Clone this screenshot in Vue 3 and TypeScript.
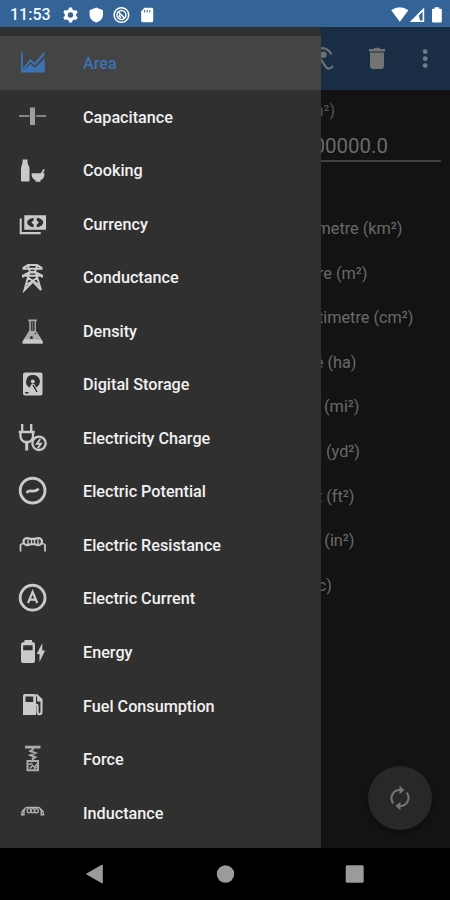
<script setup lang="ts">
interface MenuEntry {
  label: string
  icon: string
}

interface UnitRow {
  label: string
  width: number
}

const entries: MenuEntry[] = [
  { label: 'Area', icon: 'area' },
  { label: 'Capacitance', icon: 'capacitance' },
  { label: 'Cooking', icon: 'cooking' },
  { label: 'Currency', icon: 'currency' },
  { label: 'Conductance', icon: 'conductance' },
  { label: 'Density', icon: 'density' },
  { label: 'Digital Storage', icon: 'storage' },
  { label: 'Electricity Charge', icon: 'charge' },
  { label: 'Electric Potential', icon: 'potential' },
  { label: 'Electric Resistance', icon: 'resistance' },
  { label: 'Electric Current', icon: 'current' },
  { label: 'Energy', icon: 'energy' },
  { label: 'Fuel Consumption', icon: 'fuel' },
  { label: 'Force', icon: 'force' },
  { label: 'Inductance', icon: 'inductance' },
]

// Distance from the page's left edge to the end of each unit label.
const units: UnitRow[] = [
  { label: 'Kilometre (km²)', width: 402.5 },
  { label: 'Metre (m²)', width: 367.5 },
  { label: 'Centimetre (cm²)', width: 413.5 },
  { label: 'Hectare (ha)', width: 356.5 },
  { label: 'Mile (mi²)', width: 359.5 },
  { label: 'Yard (yd²)', width: 360 },
  { label: 'Foot (ft²)', width: 354.5 },
  { label: 'Inch (in²)', width: 354.5 },
  { label: 'Acre (ac)', width: 332 },
]
</script>

<template>
  <div class="screen">
    <header class="status">
      <span class="clock">11:53</span>
      <svg class="status-left" width="94" height="20" viewBox="62 4 94 20">
        <g fill="#fff">
          <g transform="translate(70.5 14)">
            <path fill-rule="evenodd" d="M-1.5-7.4h3l.5 2 1.7 1 2-.7 1.5 2.6-1.5 1.4v2.2l1.5 1.4-1.5 2.6-2-.7-1.7 1-.5 2h-3l-.5-2-1.7-1-2 .7-1.500-2.600 1.500-1.400v-2.200l-1.500-1.400 1.500-2.600 2 .7 1.700-1zM0-2.700a2.700 2.700 0 1 0 0 5.400a2.700 2.700 0 1 0 0-5.400z" />
          </g>
          <path d="M96.300 6.500l6.700 2.700v4.300c0 4-2.600 6.800-6.700 8-4.100-1.200-6.700-4-6.700-8V9.200z" />
          <path d="M144.500 6.700h7.200q1.500 0 1.500 1.500v11.500q0 1.500-1.500 1.500h-9q-1.500 0-1.500-1.500v-9.500z" />
        </g>
        <path d="M144.600 9v2.500M147.200 9v2.500M149.800 9v2.500" stroke="#336397" stroke-width="1" />
        <g fill="none" stroke="#fff">
          <circle cx="121.400" cy="14" r="7.300" stroke-width="1.500" />
          <circle cx="121.400" cy="14" r="4.500" stroke-width="1.400" />
          <path d="M118 10.500l7 7M120 13.500l-1 2 2 1" stroke-width="1.500" />
        </g>
      </svg>
      <svg class="status-right" width="56" height="20" viewBox="388 4 56 20">
        <g fill="#fff">
          <path d="M391.200 9.200q8.600-5.800 17.200 0L399.800 20.800z" />
          <path fill-rule="evenodd" d="M424.200 6.500v14.500h-14.500zM422.600 10.800l-3.700 3.700 1.200 5h2.500z" />
          <path d="M434.600 6.200h4.500v1.500h1.700q1 0 1 1v11.500q0 1.300-1.200 1.300h-7.400q-1.200 0-1.200-1.300V8.700q0-1 1-1h1.600z" />
        </g>
      </svg>
    </header>

    <main class="body">
      <section class="page">
        <div class="toolbar">
          <svg width="150" height="63" viewBox="300 27 150 63">
            <g fill="none" stroke="#6d6f71" stroke-width="2.200">
              <path d="M317 51q5-5 10-1.500 3 2 4.500 5M319 57l7 10q3 3.500 7-1" />
            </g>
            <circle cx="323.500" cy="54.800" r="3.200" fill="#6d6f71" />
            <path fill="#737472" d="M369 49h4.500l1.300-1.300h4.400l1.300 1.300h4.500v2.400h-16zM370 52.600h14v14q0 2.400-2.400 2.400h-9.200q-2.400 0-2.400-2.400z" />
            <g fill="#747b82">
              <circle cx="425.200" cy="51.700" r="2.400" />
              <circle cx="425.200" cy="58.700" r="2.400" />
              <circle cx="425.200" cy="65.600" r="2.400" />
            </g>
          </svg>
        </div>
        <div class="caption"><span>Square Metre (m²)</span></div>
        <div class="field"><span>1000000.0</span></div>
        <ul class="units">
          <li v-for="u in units" :key="u.label" :style="{ width: u.width + 'px' }">{{ u.label }}</li>
        </ul>
        <button class="fab" aria-label="Convert">
          <svg width="30" height="30" viewBox="0 0 30 30">
            <g fill="none" stroke="#747474" stroke-width="2.100">
              <path d="M8.300 20.300A8.200 8.200 0 0 1 15 7" />
              <path d="M21.700 9.700A8.200 8.200 0 0 1 15 23" />
            </g>
            <path fill="#747474" d="M14.500 2.800l5 4.200-5 4.200zM15.500 18.800l-5 4.200 5 4.200z" />
          </svg>
        </button>
      </section>

      <nav class="drawer">
        <a v-for="(e, i) in entries" :key="e.icon" class="entry" :class="{ active: i === 0 }">
          <svg class="icon" width="32" height="32" viewBox="0 0 32 32" fill="currentColor" stroke="none">
            <g v-if="e.icon === 'area'">
              <path d="M5 5.500h1.800v15.800l7.400-9.300 4.500 3.700L27.500 5.500 29 7.300 19 18.500l-4.700-3.800-7.500 9 7.700-6.700 4.700 3.800 9.600-9.300V25.600H5z" />
            </g>
            <g v-else-if="e.icon === 'capacitance'">
              <path d="M3 15h10.500v2H3zM20 15h10v2H20z" opacity=".55" />
              <path d="M14 7.500h5v17.500h-5z" opacity=".72" />
            </g>
            <g v-else-if="e.icon === 'cooking'">
              <path d="M6.500 5.500h5v3.200l2 5v12.800q0 1-1 1H6q-1 0-1-1V13.700l1.500-5z" />
              <path d="M15.500 19.200h9.300l2.700-4.200 1.300.8-1.800 3.400h1.500q0 5.300-4 7.100v1.400h-5v-1.400q-4-1.800-4-7.100z" />
            </g>
            <g v-else-if="e.icon === 'currency'">
              <path d="M3.700 11.500h2v13.500h19v2.200H3.700z" />
              <path fill-rule="evenodd" d="M8.300 8.300H30v14.500H8.300zM19.200 10.800c-5 0-8 2.200-8 4.700s3 4.800 8 4.800 8-2.200 8-4.800-3-4.700-8-4.700z" />
              <path d="M16.800 10.500h4.800q-1.300 1.400-1 2.800l2.400 2.200-2.400 2.200q-.3 1.300 1 2.800h-4.800q1.300-1.500 1-2.800l-2.400-2.200 2.400-2.200q.3-1.400-1-2.800z" />
            </g>
            <g v-else-if="e.icon === 'conductance'" fill="none" stroke="currentColor" stroke-width="2">
              <path d="M7.500 8.700V6.800L12 4h9l4.500 2.800v1.900M7 7.700h19M12 4.500l2 6.500h5l2-6.500M7 16.500v-2l6-3h7l6 3v2M7 14.700h19M13.500 11L8.500 29l8.500-8.500 8 8.500-5.500-18M12 16.500l10 7M21.500 16.500l-10 7" />
            </g>
            <g v-else-if="e.icon === 'density'">
              <path opacity=".8" fill-rule="evenodd" d="M12.300 4.500h8.600v1.800h-1v9.200l6.900 10.700q1 2.600-1.500 2.600H8q-2.500 0-1.500-2.600l6.800-10.700V6.300h-1zM14.800 6.300v9.500h3.700V6.300z" />
              <path d="M8 24.500l17 .2 1.500 3.500H6.600z" />
              <circle cx="15.500" cy="22.500" r="1.500" fill="#303030" />
              <circle cx="19.500" cy="18.500" r=".8" fill="#303030" />
              <path d="M15.800 7h1.300v8h-1.300z" opacity=".4" />
            </g>
            <g v-else-if="e.icon === 'storage'">
              <path fill-rule="evenodd" d="M9 4.500h15.500q2 0 2 2v19q0 2-2 2H9q-2 0-2-2v-19q0-2 2-2zM16.800 7a6.600 6.600 0 0 0-2.600 12.700q-.2-3.500 2.600-4 2.800.2 3 4A6.600 6.600 0 0 0 16.800 7z" />
              <circle cx="16.800" cy="13.500" r="2" />
              <path d="M17 17l4 7M9 24.800h3.500" stroke="#303030" stroke-width="1.500" />
            </g>
            <g v-else-if="e.icon === 'charge'" fill="none" stroke="currentColor" stroke-width="2.300">
              <path d="M6.200 2v7.500M15.200 2v7.500M2.700 10h16M4.500 10v4q0 4 4 6h4.500q4-2 4-6v-4" />
              <path d="M10.700 20v8.500" stroke-width="3" />
              <circle cx="23" cy="21.300" r="6.700" fill="#303030" />
              <path d="M24.300 17l-3.500 4.700h4l-3 4.500" stroke-width="1.900" />
            </g>
            <g v-else-if="e.icon === 'potential'" fill="none" stroke="currentColor">
              <circle cx="16.600" cy="15.600" r="12.400" stroke-width="2.900" />
              <path d="M10.500 17.800c4-4.500 7 1.200 12.200-4" stroke-width="2.700" />
            </g>
            <g v-else-if="e.icon === 'resistance'" fill="none" stroke="currentColor">
              <path d="M4.500 22.500V16q0-1 3.500-1.500M29 22.500V16q0-1-3.500-1.500" stroke-width="1.700" />
              <path d="M11 9q1.800 0 3 .9h5.500q1.200-.9 3-.9 3.500.5 3.500 3.600t-3.500 3.600q-1.800 0-3-.9H14q-1.200.9-3 .9-3.500-.5-3.500-3.600T11 9z" stroke-width="2.100" />
              <path d="M12 10.500v4.500M15.500 10.500v4.500M18.500 10.500v4.500M22 10.500v4.500" stroke-width="1.400" />
            </g>
            <g v-else-if="e.icon === 'current'">
              <circle cx="16.600" cy="15.700" r="12.400" fill="none" stroke="currentColor" stroke-width="2.900" />
              <path fill="none" stroke="currentColor" stroke-width="2.200" d="M12 21l4.600-11.200L21.200 21M13.500 17.600h6.200" />
            </g>
            <g v-else-if="e.icon === 'energy'">
              <path fill-rule="evenodd" d="M8.500 4h7.500v2q3 0 3 3v16q0 2-2 2H7q-2 0-2-2V9q0-3 3.500-3zM7.200 9.300v5h9.400v-5z" />
              <path d="M26.300 7v7.500h2.800L23.500 26V18h-2.800z" />
            </g>
            <g v-else-if="e.icon === 'fuel'">
              <path fill-rule="evenodd" d="M9 5h9q2 0 2 2v19H7V7q0-2 2-2zM9.500 7.500v5.500h7.700V7.500z" />
              <path fill="none" stroke="currentColor" stroke-width="2.100" d="M20 5.500l5.500 5.200v12q0 2.500-2 2.500t-2-2.500V17q0-1.500-2-1.500M22.200 8v3.500h3" />
            </g>
            <g v-else-if="e.icon === 'force'" opacity=".8">
              <path d="M9 2.700h15.500v2.800H9z" />
              <path fill="none" stroke="currentColor" stroke-width="2" d="M16.800 5v1.500l-2.500 1.500 5 2-5 2.200 5 2-2.500 1.500v2.500M11.500 18H22v9.200H11.500z" />
              <path fill="none" stroke="currentColor" stroke-width="1.500" d="M12.500 21.500l4-1M14 25.500l2.500-3 2 1.500 2.500-3M18 26l3-2" />
            </g>
            <g v-else fill="none" stroke="currentColor" stroke-width="1.500" opacity=".85">
              <path d="M5 18.800h3V14.600q.5-3 3.500-3.200h10.200q3 .2 3.500 3.200v4.200h3M6 18v-2l2-2.500M27.300 18v-2l-2-2.500" stroke-width="1.400" />
              <ellipse cx="13" cy="14.800" rx="1.900" ry="2.100" stroke-width="1.300" />
              <ellipse cx="16.700" cy="14.800" rx="1.900" ry="2.100" stroke-width="1.300" />
              <ellipse cx="20.400" cy="14.800" rx="1.900" ry="2.100" stroke-width="1.300" />
            </g>
          </svg>
          <span class="label">{{ e.label }}</span>
        </a>
      </nav>
    </main>

    <footer class="navbar">
      <svg width="450" height="52" viewBox="0 0 450 52" fill="#9b9b9b">
        <path d="M86.500 26L102.300 17v18z" stroke="#9b9b9b" stroke-width="1" stroke-linejoin="round" />
        <circle cx="225.500" cy="26" r="8.700" />
        <rect x="345.700" y="17.300" width="18" height="17.500" rx="1.500" />
      </svg>
    </footer>
  </div>
</template>

<style>
body {
  margin: 0;
  background: #000;
}
</style>

<style scoped>
.screen {
  width: 450px;
  height: 900px;
  display: flex;
  flex-direction: column;
  overflow: hidden;
  background: #000;
  font-family: Roboto, "Liberation Sans", sans-serif;
}
.status {
  height: 27px;
  flex: none;
  display: flex;
  align-items: center;
  box-sizing: border-box;
  padding: 2px 6px 0 10px;
  background: #336397;
}
.clock {
  width: 52px;
  color: #f4f7fb;
  font-size: 16px;
  line-height: 20px;
  font-weight: 500;
}
.status-right {
  margin-left: auto;
}
.body {
  height: 821px;
  flex: none;
  display: grid;
  grid-template-columns: 321px 129px;
  overflow: hidden;
}
.page {
  grid-area: 1 / 1 / 2 / 3;
  position: relative;
  background: #131313;
  color: #6a6a6a;
}
.toolbar {
  height: 63px;
  display: flex;
  justify-content: flex-end;
  background: #192d45;
}
.caption {
  width: 335px;
  padding-top: 11px;
  text-align: right;
  font-size: 16px;
  line-height: 20px;
  color: #555;
}
.field {
  width: 425px;
  margin-left: 16px;
  height: 41px;
  border-bottom: 2px solid #404040;
  display: flex;
  justify-content: flex-end;
  box-sizing: border-box;
  padding: 11px 53px 0 0;
  font-size: 20.500px;
  line-height: 28px;
}
.units {
  list-style: none;
  margin: 0;
  padding: 45px 0 0;
}
.units li {
  height: 44.600px;
  line-height: 44.600px;
  text-align: right;
  font-size: 16.300px;
  white-space: nowrap;
}
.fab {
  position: absolute;
  left: 368px;
  top: 739px;
  width: 64px;
  height: 64px;
  border: 0;
  padding: 0;
  border-radius: 50%;
  background: #282828;
  display: grid;
  place-items: center;
  box-shadow: 0 3px 6px rgba(0, 0, 0, 0.3);
}
.drawer {
  grid-area: 1 / 1 / 2 / 2;
  z-index: 1;
  padding-top: 9px;
  background: #303030;
}
.entry {
  height: 53.550px;
  display: flex;
  align-items: center;
  box-sizing: border-box;
  padding-left: 16px;
  gap: 35px;
  color: #f1f1f1;
  font-size: 16.200px;
  font-weight: 500;
  line-height: 20px;
}
.label {
  padding-top: 2.500px;
}
.icon {
  flex: none;
  color: #cacaca;
}
.active,
.active .icon {
  color: #3c73b4;
}
.active {
  background: #444;
}
.navbar {
  height: 52px;
  flex: none;
  background: #000;
}
</style>
